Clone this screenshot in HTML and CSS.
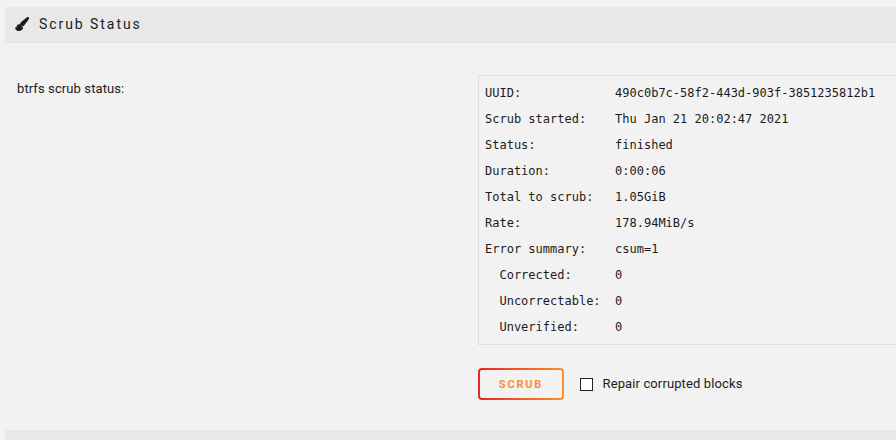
FILE: index.html
```html
<!DOCTYPE html>
<html lang="en">
<head>
<meta charset="utf-8">
<title>Scrub Status</title>
<link rel="stylesheet" href="styles.css">
</head>
<body>
<header class="title">
<svg class="brush" viewBox="0 0 14 14"><path d="M13.700.300C13.200-.2 12.300 0 11.600.600L6 5.200C5.100 6.100 5 6.900 5.400 7.700c.4.800 1.200 1.400 2 1.500.7.100 1.300-.2 1.900-1L13.800 2.300c.5-.7.500-1.500-.1-2zM4.200 7.200C2.900 7.200 2 8.100 1.700 9.300 1.400 10.500 1 10.800 0 10.200c0 2.200 1.500 3.800 3.800 3.800 2.700 0 4.400-1.700 4.300-4-1.300-.1-2.300-.8-2.800-2.500-.3-.2-.7-.3-1.100-.3z"/></svg>
<h1>Scrub Status</h1>
</header>
<main class="row">
<div class="label">btrfs scrub status:</div>
<div class="content">
<pre class="status">UUID:             490c0b7c-58f2-443d-903f-3851235812b1
Scrub started:    Thu Jan 21 20:02:47 2021
Status:           finished
Duration:         0:00:06
Total to scrub:   1.05GiB
Rate:             178.94MiB/s
Error summary:    csum=1
  Corrected:      0
  Uncorrectable:  0
  Unverified:     0</pre>
<div class="actions"><button class="scrub">SCRUB</button><label class="repair"><input type="checkbox"><span>Repair corrupted blocks</span></label></div>
</div>
</main>
<div class="next"></div>
</body>
</html>
```
FILE: styles.css
```css
* { box-sizing: border-box; }
body { margin: 0; padding: 7px 0 0 5px; height: 440px; overflow: hidden; background: #f2f2f2; color: #1c1b1b; font: 13px/26px Roboto, sans-serif; letter-spacing: .1px; }
.title { display: flex; align-items: center; height: 36px; padding-left: 10px; background: #e8e8e8; border-bottom: 1px solid #e3e3e3; }
.brush { width: 14px; height: 14px; margin: 0 10px 1px 0; fill: #1c1b1b; overflow: visible; }
h1 { margin: 0; font-size: 14px; line-height: 34px; font-weight: 400; letter-spacing: 1.94px; padding-bottom: 1px; }
.row { display: grid; grid-template-columns: 461px 1fr; height: 387px; padding: 32px 0 0 12px; }
.label { padding-top: 1px; white-space: nowrap; }
.status { height: 270px; margin: 0; padding: 4px 6px; border: 1px solid #dfdfdf; border-right: 0; font: 12px/26px "DejaVu Sans Mono", monospace; letter-spacing: 0; }
.actions { display: flex; align-items: center; margin-top: 23px; height: 32px; }
.scrub { width: 86px; height: 32px; padding: 0; border: 2px solid transparent; border-radius: 4px; background: linear-gradient(#f2f2f2, #f2f2f2) padding-box, linear-gradient(90deg, #e22828, #ff8c2f) border-box; color: #ff8c2f; font: bold 11px Roboto, sans-serif; letter-spacing: 1.8px; }
.repair { display: flex; align-items: center; margin-left: 16px; letter-spacing: .12px; }
.repair input { appearance: none; width: 13px; height: 13px; margin: 0 9.5px 0 0; border: 1px solid #222; background: #fff; }
.next { height: 20px; background: #e8e8e8; }
```
